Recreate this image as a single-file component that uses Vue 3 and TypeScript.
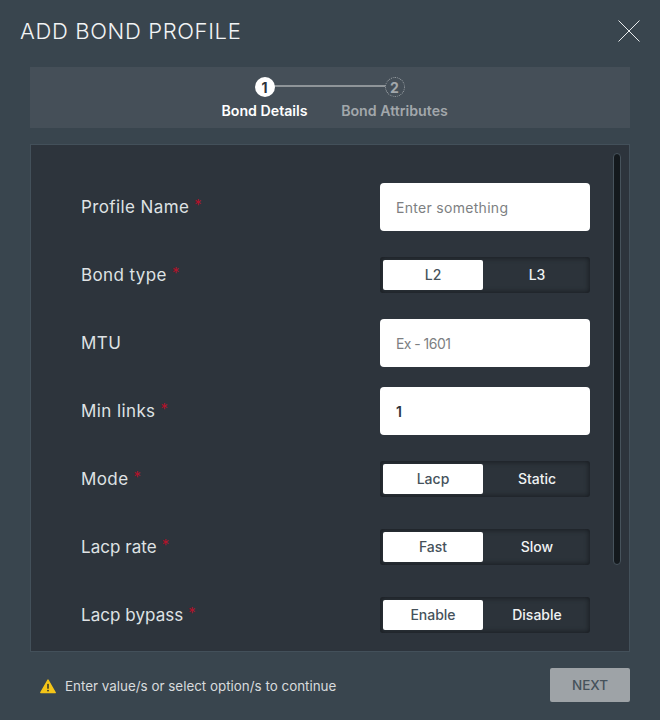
<script setup lang="ts">
interface Row {
  label: string
  required: boolean
  kind: 'input' | 'toggle'
  placeholder?: string
  value?: string
  options?: [string, string]
  tightLabel?: boolean
  tightValue?: boolean
}
const rows: Row[] = [
  { label: 'Profile Name', required: true, kind: 'input', placeholder: 'Enter something' },
  { label: 'Bond type', required: true, kind: 'toggle', options: ['L2', 'L3'] },
  { label: 'MTU', required: false, kind: 'input', placeholder: 'Ex - 1601', tightValue: true },
  { label: 'Min links', required: true, kind: 'input', value: '1' },
  { label: 'Mode', required: true, kind: 'toggle', options: ['Lacp', 'Static'] },
  { label: 'Lacp rate', required: true, kind: 'toggle', options: ['Fast', 'Slow'], tightLabel: true },
  { label: 'Lacp bypass', required: true, kind: 'toggle', options: ['Enable', 'Disable'], tightLabel: true },
]
</script>

<template>
  <div class="modal">
    <header class="head">
      <h1 class="title">ADD BOND PROFILE</h1>
      <svg class="close" width="24" height="24" viewBox="0 0 24 24" fill="none" stroke="#e8ebed" stroke-width="1">
        <path d="M1.5 1.5 22.5 22.5M22.5 1.5 1.5 22.5" />
      </svg>
    </header>

    <section class="stepper">
      <div class="step active">
        <span class="dot">1</span>
        <span class="step-label">Bond Details</span>
      </div>
      <div class="link"></div>
      <div class="step">
        <span class="dot">2</span>
        <span class="step-label">Bond Attributes</span>
      </div>
    </section>

    <section class="panel">
      <div class="scrollbar"></div>
      <div v-for="row in rows" :key="row.label" class="row">
        <div class="label" :class="{ tight: row.tightLabel }">{{ row.label }}<span v-if="row.required" class="req">*</span></div>
        <div v-if="row.kind === 'input'" class="input" :class="{ filled: row.value, tight: row.tightValue }">
          {{ row.value ?? row.placeholder }}
        </div>
        <div v-else class="toggle">
          <div class="opt on">{{ row.options?.[0] }}</div>
          <div class="opt">{{ row.options?.[1] }}</div>
        </div>
      </div>
    </section>

    <footer class="foot">
      <div class="warn">
        <svg width="16" height="15" viewBox="0 0 16 15">
          <path d="M8 1 15.2 13.6H.8Z" fill="#f5c518" stroke="#f5c518" stroke-width="1.4" stroke-linejoin="round" />
          <rect x="7.2" y="4.8" width="1.6" height="5" rx=".6" fill="#3a3a2a" />
          <circle cx="8" cy="11.6" r=".95" fill="#3a3a2a" />
        </svg>
        <span>Enter value/s or select option/s to continue</span>
      </div>
      <button class="next" type="button">NEXT</button>
    </footer>
  </div>
</template>

<style>
html, body { margin: 0; background: #39454e; }
</style>

<style scoped>
.modal {
  width: 660px;
  height: 720px;
  box-sizing: border-box;
  background: #39454e;
  font-family: "Inter", "Open Sans", sans-serif;
  overflow: hidden;
  display: flex;
  flex-direction: column;
}
.head {
  height: 67px;
  flex: none;
  padding: 0 19px 5px 20px;
  box-sizing: border-box;
  display: flex;
  align-items: center;
  justify-content: space-between;
}
.title {
  margin: 0;
  font-size: 22px;
  font-weight: 300;
  color: #f2f4f5;
  letter-spacing: 0.65px;
}
.stepper {
  flex: none;
  height: 61px;
  margin: 0 30px;
  background: #454f58;
  display: flex;
  justify-content: center;
  padding-right: 1px;
}
.step {
  width: 130px;
  display: flex;
  flex-direction: column;
  align-items: center;
  padding-top: 10px;
  box-sizing: border-box;
}
.link {
  width: 122px;
  margin: 18px -61px 0;
  height: 2px;
  background: #8f9599;
}
.dot {
  width: 20px;
  height: 20px;
  border-radius: 50%;
  box-sizing: border-box;
  border: 1px dotted #a2a7ab;
  color: #a2a7ab;
  font-size: 14px;
  font-weight: 700;
  display: flex;
  align-items: center;
  justify-content: center;
  position: relative;
  z-index: 1;
  background: #454f58;
}
.active .dot {
  background: #fff;
  border: 0;
  color: #2d343c;
}
.step-label {
  margin-top: 4px;
  font-size: 14.2px;
  line-height: 20px;
  font-weight: 600;
  color: #a2a7ab;
  white-space: nowrap;
}
.active .step-label { color: #fff; }
.panel {
  flex: none;
  margin: 16px 30px 0;
  height: 508px;
  box-sizing: border-box;
  background: #2d343c;
  border: 1px solid #43505a;
  padding: 38px 39px 0 50px;
  position: relative;
  display: flex;
  flex-direction: column;
  gap: 20px;
  overflow: hidden;
}
.scrollbar {
  position: absolute;
  left: 582px;
  top: 8px;
  width: 8px;
  height: 412px;
  box-sizing: border-box;
  background: #14191d;
  border: 1px solid #47535c;
  border-radius: 4px;
}
.row {
  height: 48px;
  flex: none;
  display: flex;
  align-items: center;
  justify-content: space-between;
}
.label {
  font-size: 17px;
  color: #dfe2e4;
  letter-spacing: 0.4px;
}
.label.tight { letter-spacing: 0.05px; }
.req {
  color: #b3122a;
  font-size: 15px;
  margin-left: 5px;
  position: relative;
  top: -3px;
}
.input {
  width: 210px;
  height: 48px;
  box-sizing: border-box;
  background: #fff;
  border-radius: 4px;
  padding: 0 16px;
  display: flex;
  align-items: center;
  font-size: 14px;
  letter-spacing: 0.3px;
  color: #7d7f82;
}
.input.tight { letter-spacing: -0.55px; }
.input.filled { color: #2d343c; font-weight: 600; }
.toggle {
  width: 210px;
  height: 36px;
  box-sizing: border-box;
  padding: 3px;
  background: #2c333a;
  border-radius: 3px;
  box-shadow: inset 0 0 5px 1px #191d22;
  display: flex;
}
.opt {
  flex: 1;
  display: flex;
  align-items: center;
  justify-content: center;
  font-size: 14px;
  font-weight: 500;
  color: #f0f2f3;
  padding-bottom: 1px;
  margin-left: 4px;
}
.opt.on {
  flex: none;
  width: 100px;
  margin-left: 0;
  background: #fff;
  color: #46525b;
  border-radius: 2px;
}
.foot {
  flex: 1;
  padding: 16px 30px 18px 40px;
  display: flex;
  align-items: center;
  justify-content: space-between;
}
.warn {
  display: flex;
  align-items: center;
  gap: 9px;
  font-size: 13.4px;
  color: #d8dbdd;
  position: relative;
  top: 1px;
}
.next {
  width: 80px;
  height: 34px;
  border: 0;
  border-radius: 2px;
  background: #9ea3a7;
  color: #46525b;
  font-family: inherit;
  font-size: 13.5px;
  font-weight: 500;
  padding: 0;
}
</style>
